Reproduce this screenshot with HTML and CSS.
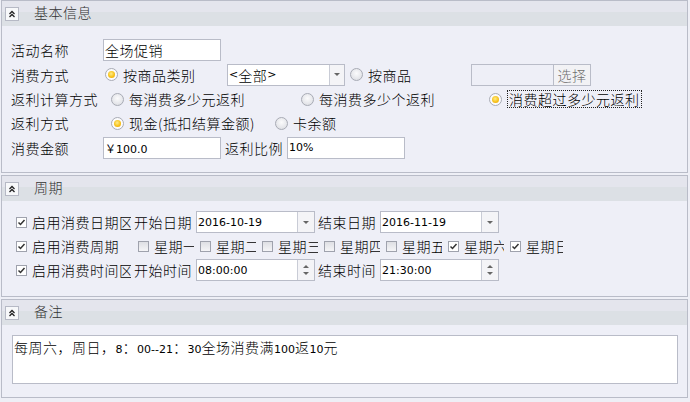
FILE: index.html
```html
<!DOCTYPE html>
<html lang="zh-CN">
<head>
  <meta charset="UTF-8" />
  <title>促销活动</title>
  <link rel="stylesheet" href="styles.css">
</head>
<body>

<!-- 基本信息 -->
<div class="group">
  <div class="group-head">
    <span class="collapse"><svg width="12" height="12" viewBox="0 0 12 12"><path d="M3.5 6 L6 3.5 L8.5 6 M3.5 9 L6 6.5 L8.5 9" fill="none" stroke="#222" stroke-width="1.3"/></svg></span>
    <span class="group-title">基本信息</span>
  </div>
  <div class="group-body basic">
    <div class="row">
      <span class="lbl w92">活动名称</span>
      <span class="field w118">全场促销</span>
    </div>
    <div class="row">
      <span class="lbl w94">消费方式</span>
      <span class="radio on w122"><i class="dot"></i>按商品类别</span>
      <span class="combo"><span class="combo-text"><span class="num">&lt;</span>全部<span class="num">&gt;</span></span><span class="drop-btn"><i class="arrow-down"></i></span></span>
      <span class="radio w121 ml5"><i class="dot"></i>按商品</span>
      <span class="field disabled w83"></span>
      <span class="btn">选择</span>
    </div>
    <div class="row short">
      <span class="lbl w100">返利计算方式</span>
      <span class="radio w190"><i class="dot"></i>每消费多少元返利</span>
      <span class="radio w188"><i class="dot"></i>每消费多少个返利</span>
      <span class="radio on"><i class="dot"></i><span class="focus">消费超过多少元返利</span></span>
    </div>
    <div class="row short">
      <span class="lbl w100">返利方式</span>
      <span class="radio on w164"><i class="dot"></i>现金(抵扣结算金额)</span>
      <span class="radio"><i class="dot"></i>卡余额</span>
    </div>
    <div class="row">
      <span class="lbl w92">消费金额</span>
      <span class="field w118 num">￥100.0</span>
      <span class="lbl w62 ml4">返利比例</span>
      <span class="field w118 num">10%</span>
    </div>
  </div>
</div>

<!-- 周期 -->
<div class="group">
  <div class="group-head">
    <span class="collapse"><svg width="12" height="12" viewBox="0 0 12 12"><path d="M3.5 6 L6 3.5 L8.5 6 M3.5 9 L6 6.5 L8.5 9" fill="none" stroke="#222" stroke-width="1.3"/></svg></span>
    <span class="group-title">周期</span>
  </div>
  <div class="group-body period">
    <div class="row short">
      <span class="check-item w118"><i class="check on"><svg width="9" height="9" viewBox="0 0 9 9"><path d="M1.5 4.5 L3.5 6.5 L7.5 2" fill="none" stroke="#333" stroke-width="1.5"/></svg></i><span class="clip w99">启用消费日期区间</span></span>
      <span class="lbl w62">开始日期</span>
      <span class="date"><span class="date-text num">2016-10-19</span><span class="drop-btn wide"><i class="arrow-down"></i></span></span>
      <span class="lbl w62 ml3">结束日期</span>
      <span class="date"><span class="date-text num">2016-11-19</span><span class="drop-btn wide"><i class="arrow-down"></i></span></span>
    </div>
    <div class="row short">
      <span class="check-item w122"><i class="check on"><svg width="9" height="9" viewBox="0 0 9 9"><path d="M1.5 4.5 L3.5 6.5 L7.5 2" fill="none" stroke="#333" stroke-width="1.5"/></svg></i>启用消费周期</span>
      <span class="check-item day"><i class="check"></i><span class="clip">星期一</span></span>
      <span class="check-item day"><i class="check"></i><span class="clip">星期二</span></span>
      <span class="check-item day"><i class="check"></i><span class="clip">星期三</span></span>
      <span class="check-item day"><i class="check"></i><span class="clip">星期四</span></span>
      <span class="check-item day"><i class="check"></i><span class="clip">星期五</span></span>
      <span class="check-item day"><i class="check on"><svg width="9" height="9" viewBox="0 0 9 9"><path d="M1.5 4.5 L3.5 6.5 L7.5 2" fill="none" stroke="#333" stroke-width="1.5"/></svg></i><span class="clip">星期六</span></span>
      <span class="check-item day"><i class="check on"><svg width="9" height="9" viewBox="0 0 9 9"><path d="M1.5 4.5 L3.5 6.5 L7.5 2" fill="none" stroke="#333" stroke-width="1.5"/></svg></i><span class="clip short-clip">星期日</span></span>
    </div>
    <div class="row short">
      <span class="check-item w118"><i class="check on"><svg width="9" height="9" viewBox="0 0 9 9"><path d="M1.5 4.5 L3.5 6.5 L7.5 2" fill="none" stroke="#333" stroke-width="1.5"/></svg></i><span class="clip w99">启用消费时间区间</span></span>
      <span class="lbl w62">开始时间</span>
      <span class="date"><span class="date-text num">08:00:00</span><span class="spin-btn"><i class="arrow-up"></i><i class="arrow-down"></i></span></span>
      <span class="lbl w62 ml3">结束时间</span>
      <span class="date"><span class="date-text num">21:30:00</span><span class="spin-btn"><i class="arrow-up"></i><i class="arrow-down"></i></span></span>
    </div>
  </div>
</div>

<!-- 备注 -->
<div class="group">
  <div class="group-head">
    <span class="collapse"><svg width="12" height="12" viewBox="0 0 12 12"><path d="M3.5 6 L6 3.5 L8.5 6 M3.5 9 L6 6.5 L8.5 9" fill="none" stroke="#222" stroke-width="1.3"/></svg></span>
    <span class="group-title">备注</span>
  </div>
  <div class="group-body memo-body">
    <div class="memo">每周六，周日，<span class="num">8</span>：<span class="num">00--21</span>：<span class="num">30</span>全场消费满<span class="num">100</span>返<span class="num">10</span>元</div>
  </div>
</div>

</body>
</html>
```

FILE: styles.css
```css
* { box-sizing: border-box; }
body {
  margin: 0;
  background-color: #eeeff6;
  font-family: "Noto Sans CJK SC", "Noto Sans", sans-serif;
  font-size: 14px;
  font-weight: 300;
  letter-spacing: 0.5px;
  color: #000;
}

i { font-style: normal; }

.num {
  font-family: "DejaVu Sans", "Noto Sans CJK SC", sans-serif;
  font-size: 11px;
  font-weight: normal;
  letter-spacing: 0;
}

/* group boxes */
.group {
  margin: 0 2px 2px 1px;
  border: 1px solid #b9bcc8;
  background-color: #eeeff7;
}

.group-head {
  height: 25px;
  display: flex;
  align-items: center;
  background: linear-gradient(#e4e5ed 0, #e4e5ed 11px, #dce0e5 11px, #dce0e5 100%);
}

.collapse {
  width: 14px;
  height: 14px;
  margin: 1px 0 0 3px;
  border: 1px solid #b6b9c5;
  background-color: #f7f8fa;
  display: flex;
  align-items: center;
  justify-content: center;
}

.group-title {
  margin: -3px 0 0 15px;
  color: #333;
  line-height: 16px;
}

.group-body { padding: 11px 0 12px 9px; }
.period { padding: 9px 0 14px 9px; }
.memo-body { padding: 10px 0 13px 9px; }

.row {
  display: flex;
  align-items: center;
  height: 25px;
  white-space: nowrap;
}
.row.short { height: 24px; }

.lbl { flex: none; line-height: 16px; }

.w62 { width: 62px; }
.w83 { width: 83px; }
.w92 { width: 92px; }
.w94 { width: 94px; }
.w99 { width: 99px; }
.w100 { width: 100px; }
.w118 { width: 118px; }
.w121 { width: 121px; }
.w122 { width: 122px; }
.w164 { width: 164px; }
.w188 { width: 188px; }
.w190 { width: 190px; }
.ml3 { margin-left: 3px; }
.ml4 { margin-left: 4px; }
.ml5 { margin-left: 5px; }

/* inputs */
.field {
  flex: none;
  height: 22px;
  border: 1px solid #b9bcc8;
  background-color: #fff;
  padding: 0 2px 0 1px;
  display: flex;
  align-items: center;
  overflow: hidden;
}
.field.disabled { background-color: transparent; }

.btn {
  flex: none;
  width: 37px;
  height: 22px;
  border: 1px solid #b9bcc8;
  border-left: none;
  background-color: #f2f2f5;
  color: #6e6e6e;
  display: flex;
  align-items: center;
  justify-content: center;
}

.combo, .date {
  flex: none;
  display: flex;
  height: 22px;
  border: 1px solid #b9bcc8;
  background-color: #fff;
}
.combo { width: 118px; }
.date { width: 119px; }

.combo-text, .date-text {
  flex: 1;
  display: flex;
  align-items: center;
  padding-left: 1px;
}

.drop-btn, .spin-btn {
  width: 15px;
  border-left: 1px solid #c9ccd6;
  background-color: #f4f4f7;
  display: flex;
  align-items: center;
  justify-content: center;
}
.drop-btn.wide, .spin-btn { width: 17px; }
.spin-btn {
  flex-direction: column;
  gap: 4px;
}

.arrow-down, .arrow-up {
  width: 0;
  height: 0;
  border-left: 3px solid transparent;
  border-right: 3px solid transparent;
}
.arrow-down { border-top: 3px solid #666; }
.arrow-up { border-bottom: 3px solid #666; }

/* radio buttons */
.radio {
  flex: none;
  display: flex;
  align-items: center;
  line-height: 16px;
}
.dot {
  flex: none;
  width: 13px;
  height: 13px;
  margin-right: 5px;
  border: 1px solid #a8abb5;
  border-radius: 50%;
  background: radial-gradient(circle at 50% 40%, #fbfbfc 0, #e6e7eb 60%, #d6d7dc 100%);
}
.radio.on .dot { background: #fbfbfc; }
.radio.on .dot::after {
  content: "";
  display: block;
  width: 7px;
  height: 7px;
  margin: 2px;
  border-radius: 50%;
  background: radial-gradient(circle at 45% 40%, #ffec8a 0, #f7c31c 55%, #ec9c00 100%);
}

.focus {
  border: 1px dotted #222;
  padding: 0 1px;
  line-height: 16px;
}

/* check boxes */
.check-item {
  flex: none;
  display: flex;
  align-items: center;
  margin-left: 5px;
  line-height: 16px;
}
.check-item.day { width: 62px; margin-left: 0; }

.check {
  flex: none;
  width: 11px;
  height: 11px;
  margin-right: 5px;
  border: 1px solid #9fa2ad;
  background: linear-gradient(#dedfe4, #f5f5f7);
  display: flex;
  align-items: center;
  justify-content: center;
}
.check.on { background: #fff; }

.clip {
  overflow: hidden;
  white-space: nowrap;
  width: 40px;
  flex: none;
}
.clip.w99 { width: 99px; margin-right: 3px; }
.clip.short-clip { width: 37px; }

/* memo */
.memo {
  margin-left: 1px;
  width: 666px;
  height: 49px;
  border: 1px solid #b9bcc8;
  background-color: #fff;
  padding: 2px 1px;
  line-height: 18px;
  white-space: nowrap;
}
```
